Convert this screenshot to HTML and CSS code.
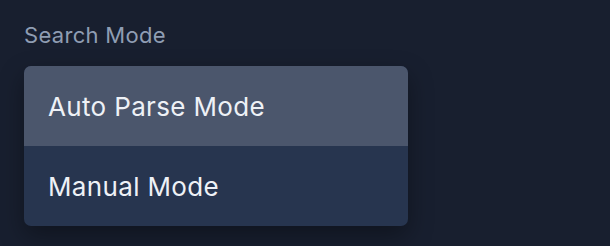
FILE: index.html
```html
<!DOCTYPE html>
<html>
<head>
<meta charset="utf-8">
<link rel="stylesheet" href="styles.css">
</head>
<body>
<div class="field">
  <div class="label">Search Mode</div>
  <ul class="menu">
    <li class="item active">Auto Parse Mode</li>
    <li class="item">Manual Mode</li>
  </ul>
</div>
</body>
</html>
```

FILE: styles.css
```css
html, body {
  margin: 0;
  padding: 0;
  background: #181f2f;
}
body {
  font-family: Inter, "Noto Sans", sans-serif;
  padding: 22px 24px 0;
  width: 610px;
  height: 246px;
  box-sizing: border-box;
}
.field {
  display: flex;
  flex-direction: column;
  width: 384px;
}
.label {
  font-size: 22px;
  line-height: 26px;
  letter-spacing: 0.3px;
  color: #8f9db3;
  margin-bottom: 18px;
}
.menu {
  list-style: none;
  margin: 0;
  padding: 0;
  border-radius: 7px;
  overflow: hidden;
  background: #27354f;
  box-shadow: 0 10px 24px rgba(0, 0, 0, 0.35);
}
.item {
  height: 80px;
  display: flex;
  align-items: center;
  padding: 0 24px;
  font-size: 26px;
  letter-spacing: 0.35px;
  color: #eef1f6;
}
.item.active {
  background: #4b566c;
}
```
